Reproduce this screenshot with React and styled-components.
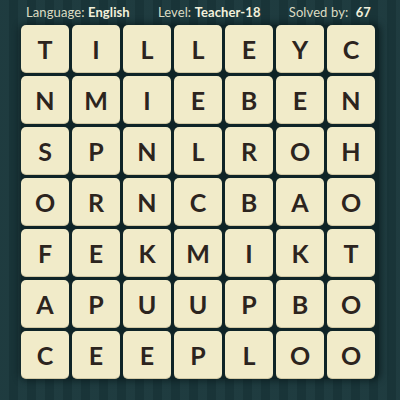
import React from "react";
import styled, { createGlobalStyle } from "styled-components";

const rows = ["TILLEYC", "NMIEBEN", "SPNLROH", "ORNCBAO", "FEKMIKT", "APUUPBO", "CEEPLOO"];

const GlobalStyle = createGlobalStyle`
  html, body {
    margin: 0;
    padding: 0;
  }
  body {
    width: 400px;
    height: 400px;
    overflow: hidden;
    font-family: "Lato", "Noto Sans", sans-serif;
  }
`;

const Page = styled.div`
  width: 400px;
  height: 400px;
  box-sizing: border-box;
  padding: 0 21px;
  background-color: #1a373b;
  background-image: repeating-linear-gradient(
    90deg,
    rgba(255, 255, 255, 0.025) 0px,
    rgba(255, 255, 255, 0.025) 9px,
    rgba(0, 0, 0, 0.05) 9px,
    rgba(0, 0, 0, 0.05) 18px
  );
  display: flex;
  flex-direction: column;
`;

const InfoBar = styled.div`
  height: 25px;
  display: flex;
  justify-content: space-between;
  align-items: center;
  padding: 0 8px 2px 5px;
  box-sizing: border-box;
  font-size: 13px;
  color: #dcdcc4;
  letter-spacing: 0.1px;
`;

const Info = styled.span`
  b {
    color: #f3f1dc;
    font-weight: 700;
    margin-left: ${(p) => p.$space || 0}px;
  }
`;

const Board = styled.div`
  display: grid;
  grid-template-columns: repeat(7, 48px);
  grid-auto-rows: 48px;
  gap: 3px;
  background: #0f2427;
  box-shadow: 0 0 6px 2px rgba(6, 20, 22, 0.6);
  border-radius: 6px;
`;

const Tile = styled.div`
  background: #f1ebc9;
  border-radius: 5px;
  display: flex;
  align-items: center;
  justify-content: center;
  font-size: 25px;
  font-weight: 700;
  color: #2c241e;
  box-shadow: inset 0 -1px 0 rgba(120, 100, 60, 0.25);
`;

export default function App() {
  return (
    <>
      <GlobalStyle />
      <Page>
        <InfoBar>
          <Info>
            Language: <b>English</b>
          </Info>
          <Info>
            Level: <b>Teacher-18</b>
          </Info>
          <Info $space={4}>
            Solved by: <b>67</b>
          </Info>
        </InfoBar>
        <Board>
          {rows.map((row, r) =>
            row.split("").map((ch, c) => <Tile key={`${r}-${c}`}>{ch}</Tile>)
          )}
        </Board>
      </Page>
    </>
  );
}
